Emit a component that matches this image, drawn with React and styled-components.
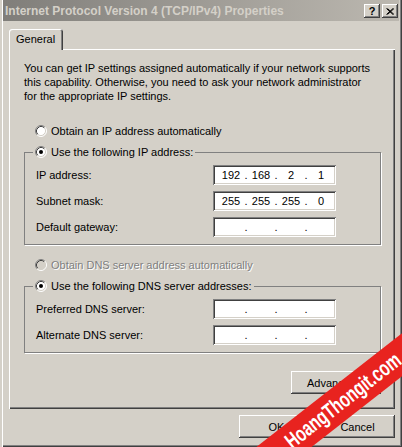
import React from "react";
import styled, { createGlobalStyle } from "styled-components";

const GlobalStyle = createGlobalStyle`
  html, body {
    margin: 0;
    padding: 0;
    background: #d4d0c8;
  }
  body {
    font-family: "Liberation Sans", Arial, sans-serif;
    font-size: 11px;
    color: #000;
  }
`;

const Window = styled.div`
  position: relative;
  width: 402px;
  height: 447px;
  box-sizing: border-box;
  padding: 0 3px 3px 3px;
  overflow: hidden;
  background: #d4d0c8;
  box-shadow: inset 2px 0 #d4d0c8, inset 3px 0 #fff, inset -1px -1px #404040,
    inset -2px -2px #808080;
`;

const TitleBar = styled.div`
  display: flex;
  align-items: center;
  height: 21px;
  padding: 0 1px 0 2px;
  background: linear-gradient(to right, #807e7a, #bcb8b0);
`;

const Title = styled.div`
  flex: 1;
  font-weight: bold;
  font-size: 12px;
  color: #d4d0c8;
  white-space: nowrap;
`;

const CaptionButton = styled.div`
  display: flex;
  align-items: center;
  justify-content: center;
  width: 16px;
  height: 14px;
  margin-left: ${(p) => (p.$gap ? "2px" : "0")};
  margin-top: 1px;
  background: #d4d0c8;
  font-weight: bold;
  font-size: 11px;
  box-shadow: inset -1px -1px #404040, inset 1px 1px #fff, inset -2px -2px #808080;
`;

const Body = styled.div`
  display: flex;
  flex-direction: column;
  padding: 8px 4px 0 6px;
`;

const TabStrip = styled.div`
  display: flex;
  height: 21px;
  margin-bottom: -1px;
`;

const Tab = styled.div`
  position: relative;
  z-index: 1;
  width: 54px;
  box-sizing: border-box;
  padding: 3px 0 0 7px;
  line-height: 14px;
  background: #d4d0c8;
  border-radius: 3px 3px 0 0;
  box-shadow: inset 1px 1px #fff, inset -1px 0 #404040, inset -2px 0 #808080;
`;

const Panel = styled.div`
  display: flex;
  flex-direction: column;
  height: 360px;
  box-sizing: border-box;
  padding: 12px 14px 0 15px;
  box-shadow: inset 1px 1px #fff, inset -1px -1px #404040, inset -2px -2px #808080;
`;

const Intro = styled.p`
  margin: 0;
  line-height: 14px;
  white-space: nowrap;
`;

const RadioRow = styled.div`
  display: flex;
  align-items: center;
  height: 14px;
  margin-top: ${(p) => p.$top || 0}px;
  padding-left: ${(p) => (p.$legend ? 0 : 11)}px;
  color: ${(p) => (p.$disabled ? "#808080" : "#000")};
  text-shadow: ${(p) => (p.$disabled ? "1px 1px #fff" : "none")};
  white-space: nowrap;
  svg {
    flex: none;
    margin-right: 4px;
  }
`;

const Group = styled.fieldset`
  margin: ${(p) => p.$top}px 0 0 0;
  padding: 6px 44px 7px 11px;
  border: 1px solid #808080;
  box-shadow: 1px 1px 0 #fff;
  display: flex;
  flex-direction: column;
  gap: 6px;
`;

const Legend = styled.legend`
  margin-left: -3px;
  padding: 0 2px;
  line-height: 14px;
`;

const FieldRow = styled.div`
  display: flex;
  align-items: center;
  justify-content: space-between;
  height: 20px;
`;

const IpBox = styled.div`
  display: flex;
  align-items: center;
  width: 123px;
  height: 20px;
  box-sizing: border-box;
  padding-left: 6px;
  background: #fff;
  box-shadow: inset 1px 1px #808080, inset -1px -1px #fff, inset 2px 2px #404040,
    inset -2px -2px #d4d0c8;
`;

const Octet = styled.span`
  width: 24px;
  text-align: center;
`;

const Dot = styled.span`
  width: 6px;
  text-align: center;
`;

const Button = styled.div`
  display: flex;
  align-items: center;
  justify-content: center;
  width: ${(p) => p.$w}px;
  height: 23px;
  background: #d4d0c8;
  box-shadow: inset -1px -1px #404040, inset 1px 1px #fff, inset -2px -2px #808080;
`;

const AdvancedRow = styled.div`
  display: flex;
  justify-content: flex-end;
  margin-top: 18px;
`;

const Footer = styled.div`
  display: flex;
  justify-content: flex-end;
  gap: 6px;
  margin-top: 6px;
`;

const Ribbon = styled.div`
  position: absolute;
  left: 189px;
  top: 387px;
  width: 300px;
  height: 34px;
  display: flex;
  align-items: center;
  justify-content: center;
  background: #e8231f;
  transform: rotate(-38deg);
  span {
    display: inline-block;
    margin-left: 10px;
    color: #fff;
    font-weight: bold;
    font-size: 22px;
    line-height: 22px;
    transform: scaleX(0.7);
    white-space: nowrap;
  }
`;

const Radio = ({ checked, disabled }) => (
  <svg width="12" height="12" viewBox="0 0 12 12">
    <circle cx="6" cy="6" r="5" fill={disabled ? "#d4d0c8" : "#fff"} />
    <path d="M2.11 9.89A5.5 5.5 0 0 1 9.89 2.11" fill="none" stroke="#808080" />
    <path d="M9.89 2.11A5.5 5.5 0 0 1 2.11 9.89" fill="none" stroke="#fff" />
    <path d="M2.82 9.18A4.5 4.5 0 0 1 9.18 2.82" fill="none" stroke="#404040" />
    <path d="M9.18 2.82A4.5 4.5 0 0 1 2.82 9.18" fill="none" stroke="#d4d0c8" />
    {checked && <circle cx="6" cy="6" r="2" fill="#000" />}
  </svg>
);

const Ip = ({ value }) => {
  const parts = value ? value.split(".") : ["", "", "", ""];
  return (
    <IpBox>
      {parts.map((p, i) => (
        <React.Fragment key={i}>
          {i > 0 && <Dot>.</Dot>}
          <Octet>{p}</Octet>
        </React.Fragment>
      ))}
    </IpBox>
  );
};

const ipFields = [
  ["IP address:", "192.168.2.1"],
  ["Subnet mask:", "255.255.255.0"],
  ["Default gateway:", ""],
];

const dnsFields = [
  ["Preferred DNS server:", ""],
  ["Alternate DNS server:", ""],
];

export default function App() {
  return (
    <>
      <GlobalStyle />
      <Window>
        <TitleBar>
          <Title>Internet Protocol Version 4 (TCP/IPv4) Properties</Title>
          <CaptionButton>?</CaptionButton>
          <CaptionButton $gap>
            <svg width="8" height="7" viewBox="0 0 8 7">
              <path d="M0.5 0.5L7 6.5M1.5 0.5L8 6.5M7 0.5L0.5 6.5M8 0.5L1.5 6.5" stroke="#000" />
            </svg>
          </CaptionButton>
        </TitleBar>
        <Body>
          <TabStrip>
            <Tab>General</Tab>
          </TabStrip>
          <Panel>
            <Intro>
              You can get IP settings assigned automatically if your network supports
              <br />
              this capability. Otherwise, you need to ask your network administrator
              <br />
              for the appropriate IP settings.
            </Intro>
            <RadioRow $top={21}>
              <Radio />
              Obtain an IP address automatically
            </RadioRow>
            <Group $top={7}>
              <Legend>
                <RadioRow $legend>
                  <Radio checked />
                  Use the following IP address:
                </RadioRow>
              </Legend>
              {ipFields.map(([label, value]) => (
                <FieldRow key={label}>
                  {label}
                  <Ip value={value} />
                </FieldRow>
              ))}
            </Group>
            <RadioRow $top={13} $disabled>
              <Radio disabled />
              Obtain DNS server address automatically
            </RadioRow>
            <Group $top={7}>
              <Legend>
                <RadioRow $legend>
                  <Radio checked />
                  Use the following DNS server addresses:
                </RadioRow>
              </Legend>
              {dnsFields.map(([label, value]) => (
                <FieldRow key={label}>
                  {label}
                  <Ip value={value} />
                </FieldRow>
              ))}
            </Group>
            <AdvancedRow>
              <Button $w={90}>Advanced...</Button>
            </AdvancedRow>
          </Panel>
          <Footer>
            <Button $w={75}>OK</Button>
            <Button $w={75}>Cancel</Button>
          </Footer>
        </Body>
        <Ribbon>
          <span>HoangThongit.com</span>
        </Ribbon>
      </Window>
    </>
  );
}
